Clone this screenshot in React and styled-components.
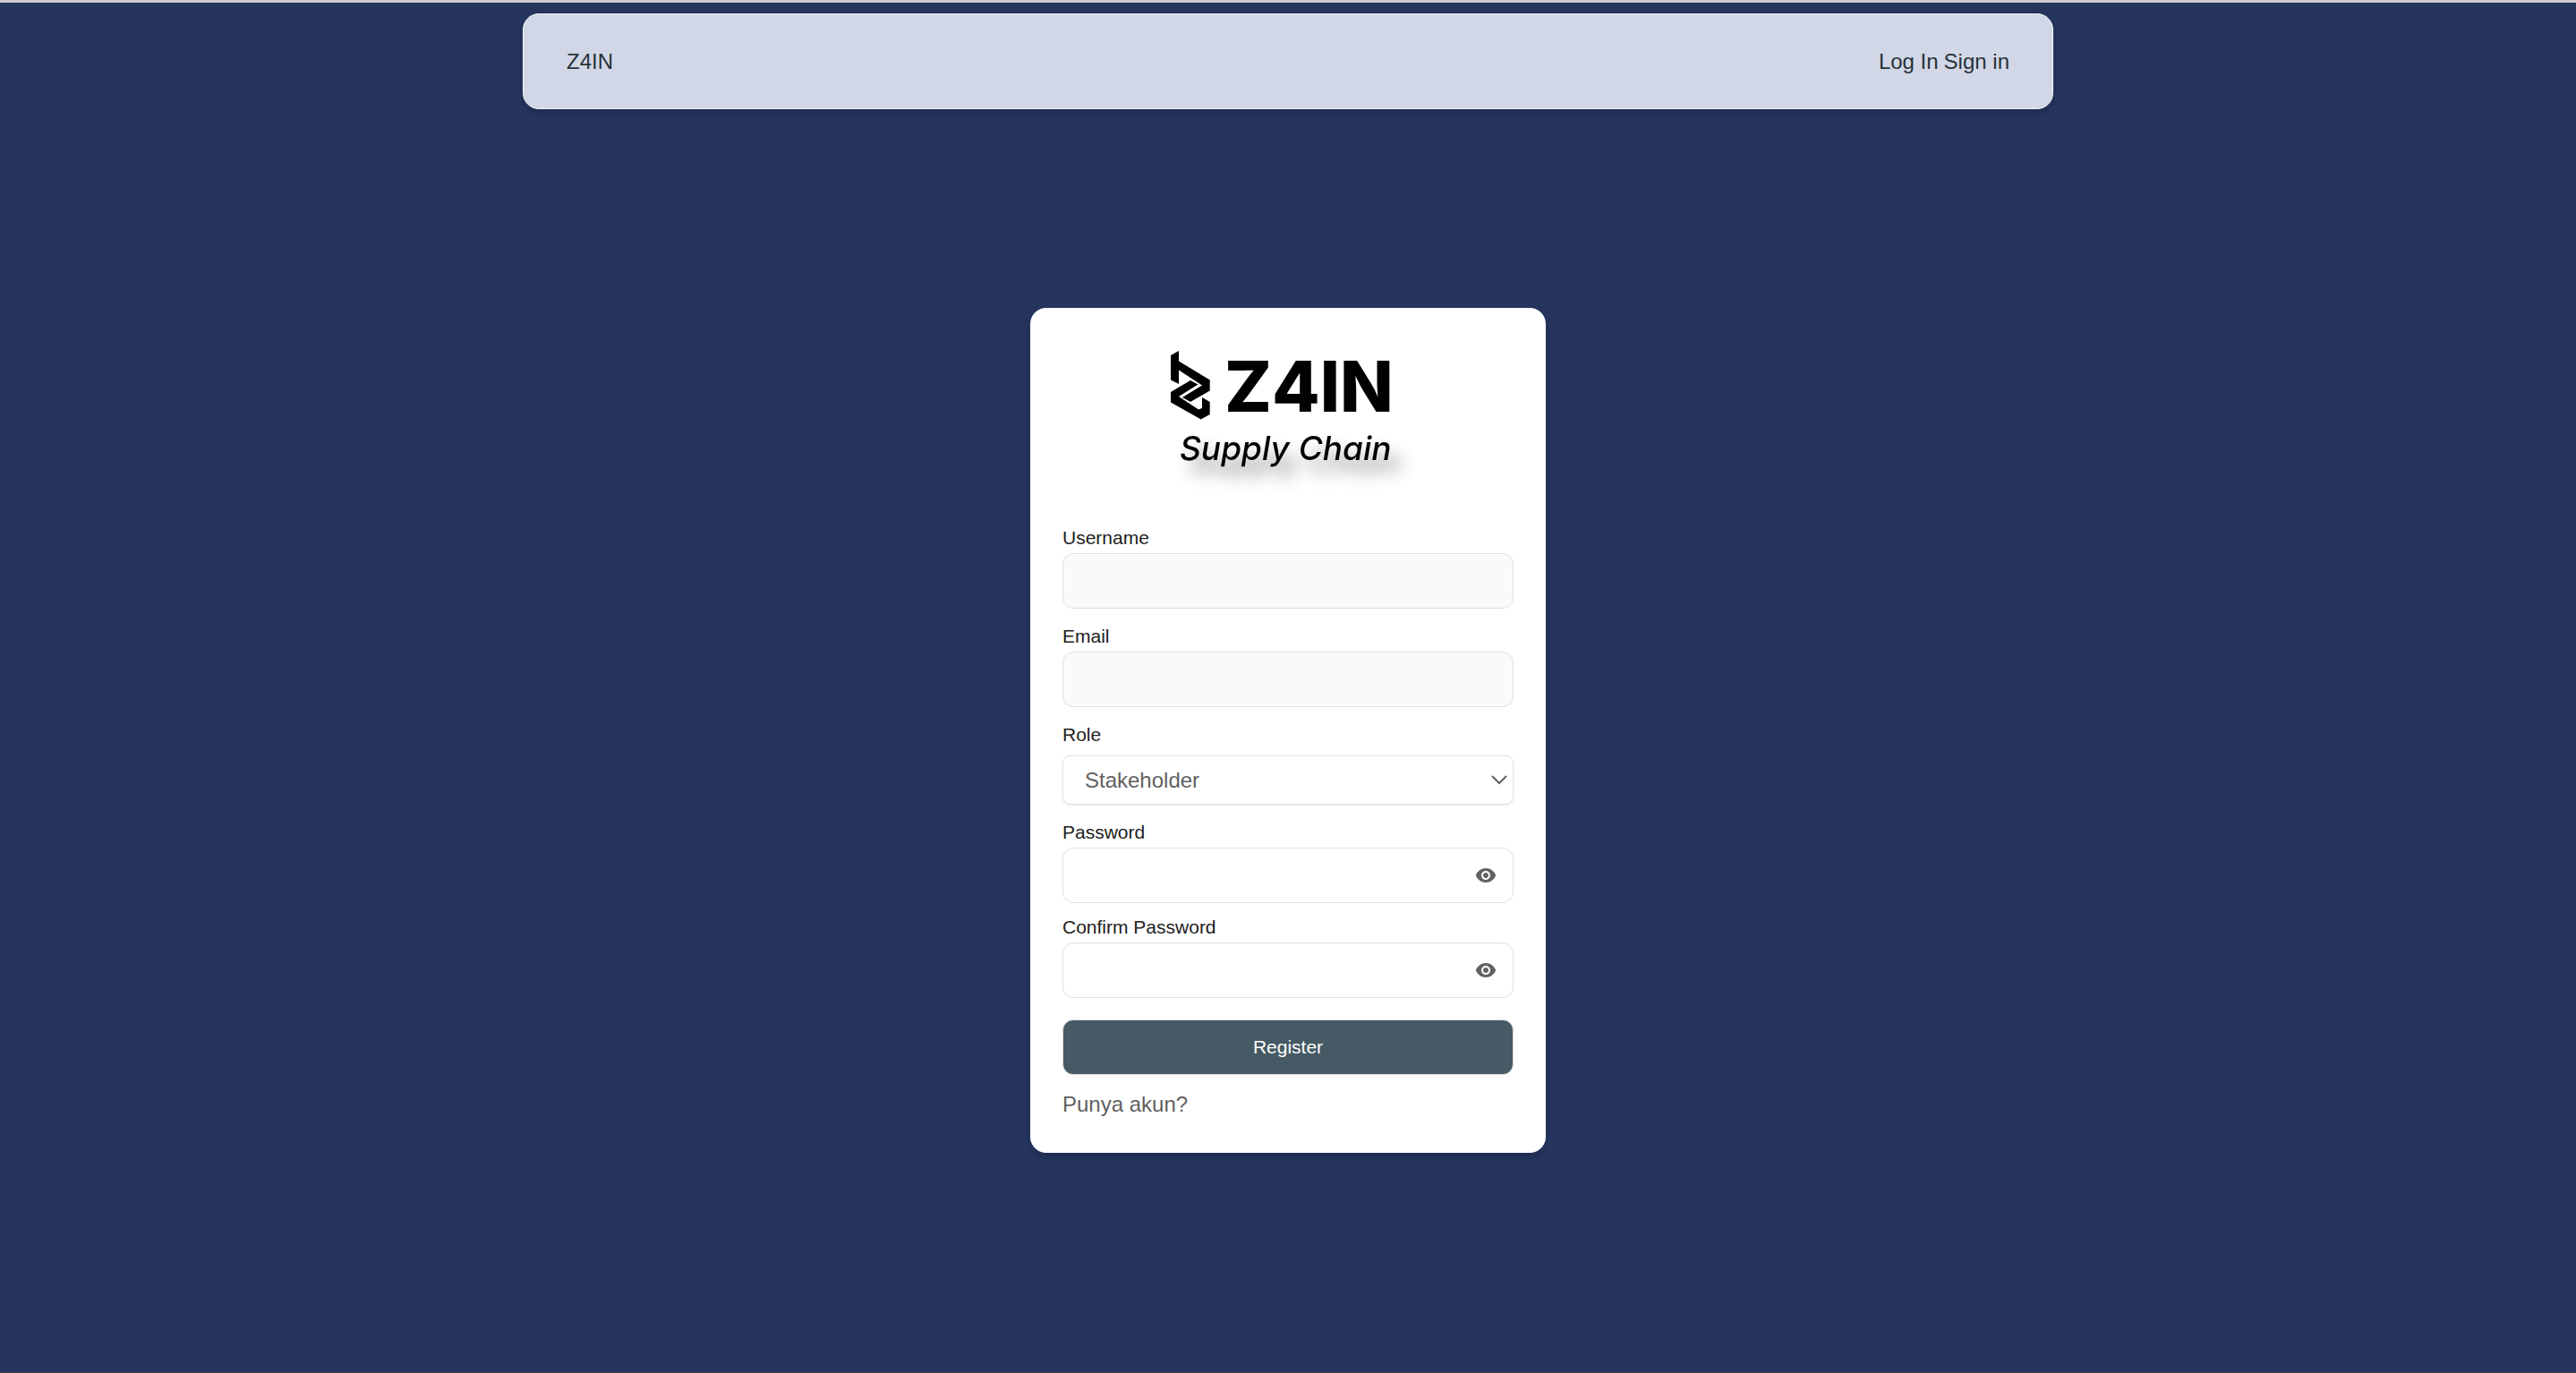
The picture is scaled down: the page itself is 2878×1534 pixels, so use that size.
import React, { useState } from "react";
import styled, { createGlobalStyle } from "styled-components";

const GlobalStyle = createGlobalStyle`
  *, *::before, *::after { box-sizing: border-box; }
  body {
    margin: 0;
    background: #25355d;
    color: #616161;
    font-family: "Liberation Sans", Arial, sans-serif;
    font-size: 24px;
    line-height: 36px;
  }
`;

const Page = styled.div`
  display: flex;
  flex-direction: column;
  align-items: center;
  min-height: 100vh;
  border-top: 3px solid #cccccc;
  border-bottom: 1px solid #47413f;
`;

const NavBar = styled.nav`
  display: flex;
  align-items: center;
  justify-content: space-between;
  width: 100%;
  max-width: 1710px;
  margin-top: 12px;
  padding: 35px 48px 34px;
  border: 1px solid #f3f5fb;
  border-radius: 18px;
  background: #d1d7e6;
  box-shadow: 0 6px 9px -1px rgba(0, 0, 0, 0.12), 0 3px 6px -1px rgba(0, 0, 0, 0.07);
`;

const NavLinks = styled.div`
  display: flex;
  gap: 6px;
`;

const NavLink = styled.a`
  color: #263238;
  text-decoration: none;
`;

const Main = styled.main`
  display: flex;
  flex: 1;
  align-items: center;
  justify-content: center;
  width: 100%;
  padding-bottom: 24px;
`;

const Card = styled.form`
  display: flex;
  flex-direction: column;
  width: 100%;
  max-width: 576px;
  padding: 36px;
  border-radius: 18px;
  background: #ffffff;
  box-shadow: 0 6px 9px -1px rgba(0, 0, 0, 0.12), 0 3px 6px -1px rgba(0, 0, 0, 0.07);
`;

const Logo = styled.svg`
  display: block;
  align-self: center;
  width: 300px;
  height: 206px;
  overflow: visible;
`;

const LogoName = styled.text`
  font: 800 78px Inter, sans-serif;
`;

const LogoTagline = styled.text`
  font: italic 500 37px Inter, sans-serif;
  font-feature-settings: "cv11";
  filter: drop-shadow(11px 15px 9px rgba(0, 0, 0, 0.45));
`;

const Field = styled.div`
  display: flex;
  flex-direction: column;
  gap: ${(p) => p.$gap || 2}px;
  margin-bottom: ${(p) => p.$after || 16}px;
`;

const Label = styled.label`
  color: #212121;
  font-size: 21px;
  line-height: 30px;
`;

const Control = styled.div`
  display: flex;
  align-items: center;
  height: ${(p) => p.$height || 62}px;
  border: 1px solid #e0e0e0;
  border-radius: ${(p) => p.$radius || 12}px;
  background: ${(p) => p.$fill || "#ffffff"};
  box-shadow: ${(p) => (p.$raised ? "0 1px 3px rgba(0, 0, 0, 0.08)" : "none")};
  &:focus-within { border-color: #455a64; }
`;

const Input = styled.input`
  flex: 1;
  min-width: 0;
  height: 100%;
  padding: 0 18px;
  border: 0;
  outline: 0;
  background: transparent;
  color: #212121;
  font: inherit;
`;

const Select = styled.select`
  flex: 1;
  height: 100%;
  margin-right: -30px;
  padding: 1px 36px 0 24px;
  border: 0;
  outline: 0;
  appearance: none;
  background: transparent;
  color: #616161;
  font: inherit;
`;

const Chevron = styled.svg`
  width: 18px;
  height: 12px;
  margin-right: 6px;
  pointer-events: none;
`;

const EyeButton = styled.button`
  display: flex;
  margin-right: 18px;
  padding: 0;
  border: 0;
  background: none;
  color: #616161;
  cursor: pointer;
`;

const Submit = styled.button`
  height: 62px;
  margin: 8px 0 15px;
  border: 1px solid #e0e0e0;
  border-radius: 12px;
  background: #455a64;
  color: #ffffff;
  font-family: inherit;
  font-size: 21px;
  cursor: pointer;
`;

const AccountLink = styled.a`
  align-self: flex-start;
  color: #616161;
  text-decoration: none;
`;

function BrandLogo() {
  return (
    <Logo viewBox="0 0 300 206" role="img" aria-label="Z4IN Supply Chain">
      <g transform="translate(19 12)">
        <path d="M0 5L9 0V11.500L43.700 32.500V44.500L22 57L13 52L35 38.500L9 21.500V37L0 32.500Z" />
        <path d="M0 46L22 33L30.500 37.500L9 51L31 65.500L35 64V52L43.700 57V71L33.700 76.500L0 57.500Z" />
      </g>
      <LogoName x="79" y="80">Z4IN</LogoName>
      <LogoTagline x="29" y="134">Supply Chain</LogoTagline>
    </Logo>
  );
}

function EyeIcon() {
  return (
    <svg width="24" height="24" viewBox="0 0 24 24" fill="currentColor" aria-hidden="true">
      <path d="M12 4C7 4 2.500 7.500 0.800 12c1.700 4.500 6.200 8 11.200 8s9.500-3.500 11.200-8c-1.700-4.500-6.200-8-11.200-8zM12 17c-2.760 0-5-2.240-5-5s2.240-5 5-5 5 2.240 5 5-2.240 5-5 5zm0-8c-1.660 0-3 1.340-3 3s1.340 3 3 3 3-1.340 3-3-1.340-3-3-3z" />
    </svg>
  );
}

function PasswordField({ id, label, after }) {
  const [visible, setVisible] = useState(false);
  return (
    <Field $after={after}>
      <Label htmlFor={id}>{label}</Label>
      <Control>
        <Input id={id} type={visible ? "text" : "password"} />
        <EyeButton type="button" aria-label="Toggle visibility" onClick={() => setVisible(!visible)}>
          <EyeIcon />
        </EyeButton>
      </Control>
    </Field>
  );
}

export default function App() {
  return (
    <Page>
      <GlobalStyle />
      <NavBar>
        <NavLink href="#home">Z4IN</NavLink>
        <NavLinks>
          <NavLink href="#login">Log In</NavLink>
          <NavLink href="#signin">Sign in</NavLink>
        </NavLinks>
      </NavBar>
      <Main>
        <Card onSubmit={(e) => e.preventDefault()}>
          <BrandLogo />
          <Field>
            <Label htmlFor="username">Username</Label>
            <Control $fill="#fafafa">
              <Input id="username" type="text" />
            </Control>
          </Field>
          <Field>
            <Label htmlFor="email">Email</Label>
            <Control $fill="#fafafa">
              <Input id="email" type="email" />
            </Control>
          </Field>
          <Field $gap={8}>
            <Label htmlFor="role">Role</Label>
            <Control $height={55} $radius={9} $raised>
              <Select id="role" defaultValue="Stakeholder">
                <option>Stakeholder</option>
              </Select>
              <Chevron viewBox="0 0 18 12" aria-hidden="true">
                <path d="M1 2L9 10L17 2" fill="none" stroke="#616161" strokeWidth="2" />
              </Chevron>
            </Control>
          </Field>
          <PasswordField id="password" label="Password" after={12} />
          <PasswordField id="confirm" label="Confirm Password" after={16} />
          <Submit type="submit">Register</Submit>
          <AccountLink href="#login">Punya akun?</AccountLink>
        </Card>
      </Main>
    </Page>
  );
}
